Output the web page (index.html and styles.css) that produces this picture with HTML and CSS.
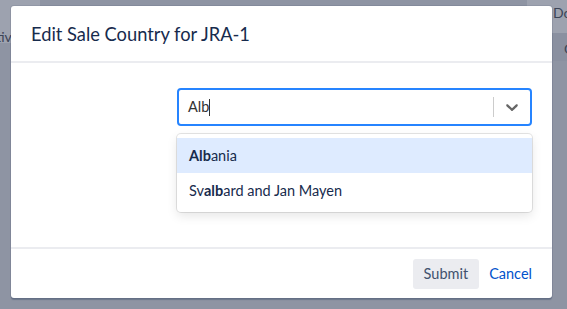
FILE: index.html
```html
<!DOCTYPE html>
<html lang="en">

<head>
    <meta charset="UTF-8">
    <meta name="viewport" content="width=device-width, initial-scale=1.0">
    <title>Edit Sale Country</title>
    <link rel="stylesheet" href="styles.css">
</head>

<body>
    <div class="page">
        <div class="page-left">
            <div class="tab-row"><span class="tab-label">Activity</span></div>
        </div>
        <div class="page-mid"></div>
        <div class="page-right">
            <div class="col-title">Done</div>
            <div class="col-band"><span class="col-label">Comments</span></div>
        </div>
    </div>

    <div class="blanket">
        <div class="dialog">
            <div class="dialog-header">
                <h3>Edit Sale Country for JRA-1</h3>
            </div>
            <div class="dialog-body">
                <div class="select-wrap">
                    <div class="select-control">
                        <div class="select-value">Alb<span class="caret"></span></div>
                        <span class="select-sep"></span>
                        <div class="select-indicator">
                            <svg width="20" height="20" viewBox="0 0 20 20">
                                <path fill="#666" d="M4.516 7.548c0.436-0.446 1.043-0.481 1.576 0l3.908 3.747 3.908-3.747c0.533-0.481 1.141-0.446 1.574 0 0.436 0.445 0.408 1.197 0 1.615-0.406 0.418-4.695 4.502-4.695 4.502-0.217 0.223-0.502 0.335-0.787 0.335s-0.57-0.112-0.789-0.335c0 0-4.287-4.084-4.695-4.502s-0.436-1.17 0-1.615z"/>
                            </svg>
                        </div>
                    </div>
                    <ul class="select-menu">
                        <li class="option focused"><b>Alb</b>ania</li>
                        <li class="option">Sv<b>alb</b>ard and Jan Mayen</li>
                    </ul>
                </div>
            </div>
            <div class="dialog-footer">
                <button class="btn-submit">Submit</button>
                <a href="#" class="btn-cancel">Cancel</a>
            </div>
        </div>
    </div>
</body>

</html>
```

FILE: styles.css
```css
body {
    margin: 0;
    font-family: Lato, "Noto Sans", sans-serif;
    height: 309px;
    overflow: hidden;
}

/* page behind the dialog, already dimmed */
.page {
    display: flex;
    height: 309px;
    background-color: #8e94a3;
}

.page-left {
    width: 40px;
}

.tab-row {
    height: 43px;
    background-color: #9da2af;
    overflow: hidden;
    white-space: nowrap;
}

.tab-label {
    display: inline-block;
    margin-left: -20px;
    margin-top: 28px;
    font-size: 14px;
    color: #3b4457;
}

.page-mid {
    flex: 1;
}

.page-right {
    width: 40px;
    overflow: hidden;
    white-space: nowrap;
}

.col-title {
    height: 33px;
    background-color: #9da2af;
    padding-left: 26px;
    padding-top: 4px;
    box-sizing: border-box;
    font-size: 14px;
    color: #3b4457;
}

.col-band {
    height: 28px;
    background-color: #8a90a0;
    padding-left: 37px;
    padding-top: 7px;
    box-sizing: border-box;
    font-size: 14px;
    color: #3b4457;
}

.blanket {
    position: absolute;
    top: 0;
    left: 0;
    right: 0;
    bottom: 0;
}

.dialog {
    position: absolute;
    top: 6px;
    left: 11px;
    width: 541px;
    height: 292px;
    background-color: #fff;
    border-radius: 3px;
    box-shadow: 0 0 0 1px rgba(9, 30, 66, 0.08), 0 2px 1px rgba(9, 30, 66, 0.25);
    display: flex;
    flex-direction: column;
}

.dialog-header {
    height: 55px;
    padding: 0 20px;
    display: flex;
    align-items: center;
    border-bottom: 2px solid #ebecf0;
    flex-shrink: 0;
}

.dialog-header h3 {
    margin: 0;
    font-size: 18.3px;
    font-weight: 400;
    color: #172b4d;
}

.dialog-body {
    flex: 1;
    padding: 25px 20px 0 166px;
    border-bottom: 2px solid #ebecf0;
}

.select-wrap {
    position: relative;
}

.select-control {
    height: 38px;
    box-sizing: border-box;
    border: 2px solid #2684ff;
    border-radius: 4px;
    display: flex;
    align-items: center;
}

.select-value {
    flex: 1;
    padding-left: 9px;
    font-size: 14.5px;
    color: #333;
}

.caret {
    display: inline-block;
    width: 1px;
    height: 17px;
    background-color: #333;
    vertical-align: -4px;
}

.select-sep {
    width: 1px;
    height: 20px;
    background-color: #ccc;
}

.select-indicator {
    width: 36px;
    display: flex;
    justify-content: center;
    align-items: center;
}

.select-indicator svg {
    display: block;
}

.select-menu {
    position: absolute;
    top: 46px;
    left: 0;
    right: 0;
    margin: 0;
    padding: 4px 0;
    list-style-type: none;
    background-color: #fff;
    border-radius: 4px;
    box-shadow: 0 0 0 1px rgba(0, 0, 0, 0.1), 0 4px 11px rgba(0, 0, 0, 0.1);
}

.option {
    padding: 8px 12px;
    line-height: 19px;
    font-size: 14.5px;
    color: #172b4d;
}

.option b {
    font-weight: 700;
}

.option.focused {
    background-color: #deebff;
}

.dialog-footer {
    height: 49px;
    padding: 0 20px;
    display: flex;
    justify-content: flex-end;
    align-items: center;
    flex-shrink: 0;
}

.btn-submit {
    height: 30px;
    padding: 0 11px;
    border: none;
    border-radius: 3px;
    background-color: #ebecf0;
    color: #42526e;
    font-family: inherit;
    font-size: 14.5px;
    cursor: pointer;
}

.btn-cancel {
    margin-left: 10px;
    color: #0052cc;
    font-size: 14.5px;
    text-decoration: none;
}
```
